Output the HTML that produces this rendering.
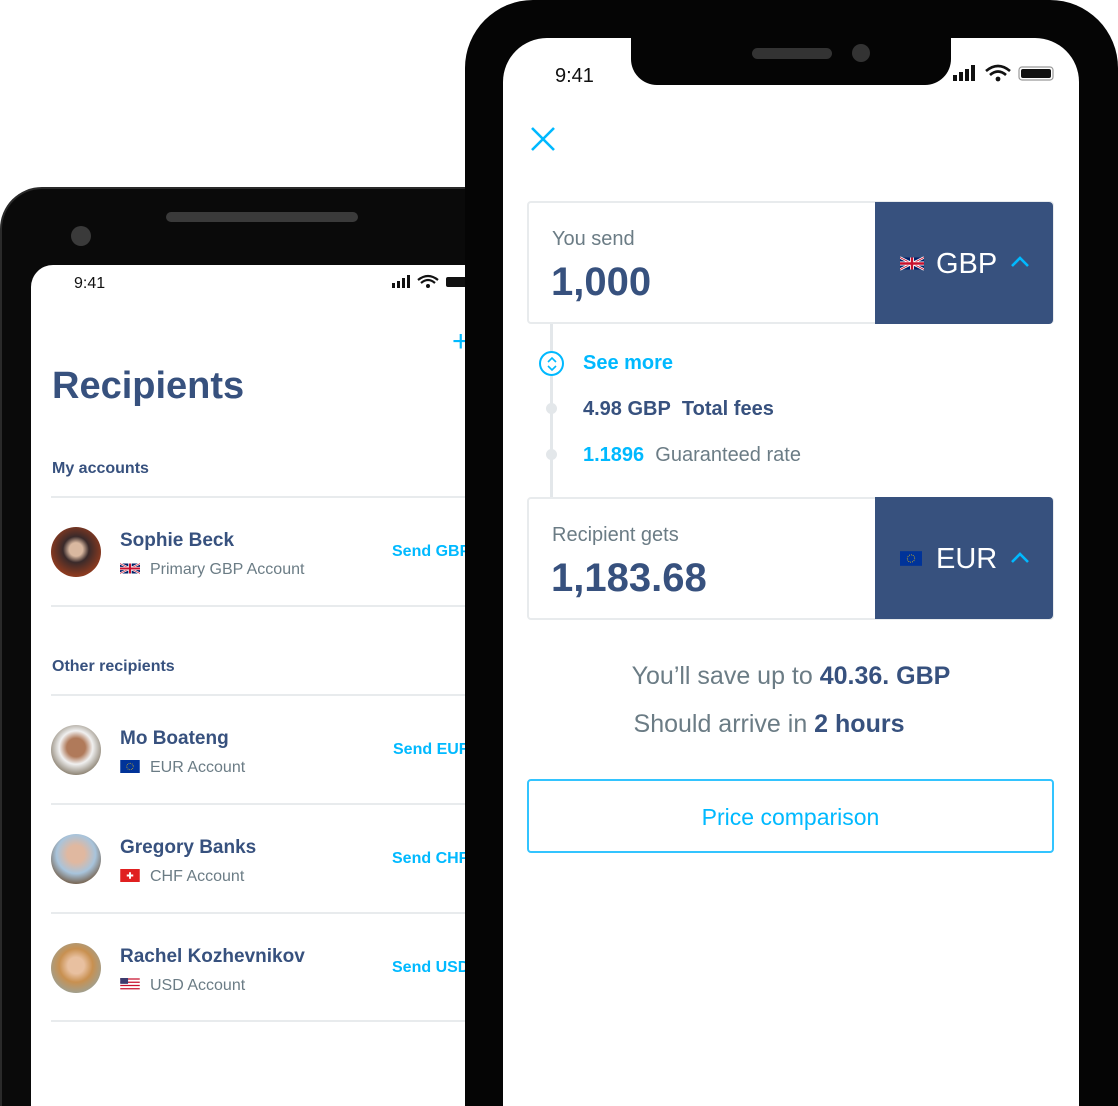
<!DOCTYPE html>
<html style="width:1118px;height:1106px;overflow:hidden"><head><meta charset="utf-8"><style>
*{margin:0;padding:0;box-sizing:border-box}
body{width:1118px;height:1106px;background:#fff;position:relative;overflow:hidden;font-family:"Liberation Sans",sans-serif}
.a{position:absolute}
.navy{color:#37517e}
.cy{color:#00b9ff}
.gr{color:#6b7c85}
.line{position:absolute;height:2px;background:#e8ebed}
.av{position:absolute;width:50px;height:50px;border-radius:50%}
.nm{position:absolute;font-size:19px;font-weight:bold;color:#37517e}
.sub{position:absolute;font-size:16px;color:#6b7c85}
.snd{position:absolute;font-size:16px;font-weight:bold;color:#00b9ff}
.fl{display:inline-block;vertical-align:-1px;margin-right:10px}
</style></head><body>
<svg width="0" height="0" style="position:absolute"><defs>
<symbol id="uk" viewBox="0 0 60 30"><rect width="60" height="30" fill="#012169"/><path d="M0 0L60 30M60 0L0 30" stroke="#fff" stroke-width="6"/><path d="M0 0L60 30M60 0L0 30" stroke="#c8102e" stroke-width="2"/><path d="M30 0V30M0 15H60" stroke="#fff" stroke-width="10"/><path d="M30 0V30M0 15H60" stroke="#c8102e" stroke-width="6"/></symbol>
<symbol id="eu" viewBox="0 0 30 20"><rect width="30" height="20" fill="#003399"/><circle cx="15" cy="10" r="5" fill="none" stroke="#fc0" stroke-width="1.2" stroke-dasharray="1 1.6"/></symbol>
<symbol id="ch" viewBox="0 0 30 20"><rect width="30" height="20" fill="#e02020"/><path d="M15 5V15M10 10H20" stroke="#fff" stroke-width="3"/></symbol>
<symbol id="us" viewBox="0 0 30 20"><rect width="30" height="20" fill="#fff"/><path d="M0 1.5H30M0 6.5H30M0 11.5H30M0 16.5H30" stroke="#c8102e" stroke-width="2"/><rect width="12" height="9" fill="#3c3b6e"/></symbol>
</defs></svg>
<!-- back phone -->
<div class="a" style="left:0;top:187px;width:540px;height:919px;background:#0a0a0a;border-radius:42px 42px 0 0;border:2px solid #2a2a2a;border-bottom:0"></div>
<div class="a" style="left:166px;top:212px;width:192px;height:10px;background:#3a3a3a;border-radius:5px"></div>
<div class="a" style="left:71px;top:226px;width:20px;height:20px;background:#3a3a3a;border-radius:50%"></div>
<div class="a" style="left:31px;top:265px;width:500px;height:841px;background:#fff;border-radius:22px 22px 0 0"></div>
<div class="a" style="left:74px;top:275px;font-size:16px;color:#111">9:41</div>
<svg class="a" style="left:392px;top:274px" width="80" height="16"><rect x="0" y="9" width="3" height="5" fill="#111"/><rect x="5" y="7" width="3" height="7" fill="#111"/><rect x="10" y="4" width="3" height="10" fill="#111"/><rect x="15" y="1" width="3" height="13" fill="#111"/><path d="M26 6 Q36 -2 46 6 M29 9 Q36 3 43 9" stroke="#111" stroke-width="2.2" fill="none"/><circle cx="36" cy="12" r="2" fill="#111"/><rect x="54" y="3" width="24" height="10" rx="2" fill="#111"/></svg>
<div class="a cy" style="left:452px;top:325px;font-size:30px">+</div>
<div class="a navy" style="left:52px;top:365px;font-size:38px;font-weight:bold">Recipients</div>
<div class="a navy" style="left:52px;top:460px;font-size:16px;font-weight:bold">My accounts</div>
<div class="line" style="left:51px;top:496px;width:420px"></div>
<div class="av" style="left:51px;top:527px;background:radial-gradient(circle at 50% 45%,#d9b8a0 18%,#3a2a2a 35%,#8a3a20 70%)"></div>
<div class="nm" style="left:120px;top:530px">Sophie Beck</div>
<div class="sub" style="left:120px;top:561px"><svg class="fl" width="20" height="13"><use href="#uk"/></svg>Primary GBP Account</div>
<div class="snd" style="left:392px;top:543px">Send GBP</div>
<div class="line" style="left:51px;top:605px;width:420px"></div>
<div class="a navy" style="left:52px;top:658px;font-size:16px;font-weight:bold">Other recipients</div>
<div class="line" style="left:51px;top:694px;width:420px"></div>
<div class="av" style="left:51px;top:725px;background:radial-gradient(circle at 50% 45%,#b07a5a 25%,#f0f0f0 45%,#8a8070 75%)"></div>
<div class="nm" style="left:120px;top:728px">Mo Boateng</div>
<div class="sub" style="left:120px;top:759px"><svg class="fl" width="20" height="13"><use href="#eu"/></svg>EUR Account</div>
<div class="snd" style="left:393px;top:741px">Send EUR</div>
<div class="line" style="left:51px;top:803px;width:420px"></div>
<div class="av" style="left:51px;top:834px;background:radial-gradient(circle at 50% 40%,#e0b8a0 22%,#a8c4dc 50%,#7a6a5a 75%)"></div>
<div class="nm" style="left:120px;top:837px">Gregory Banks</div>
<div class="sub" style="left:120px;top:868px"><svg class="fl" width="20" height="13"><use href="#ch"/></svg>CHF Account</div>
<div class="snd" style="left:392px;top:850px">Send CHF</div>
<div class="line" style="left:51px;top:912px;width:420px"></div>
<div class="av" style="left:51px;top:943px;background:radial-gradient(circle at 50% 45%,#e8c0a0 22%,#c89050 45%,#a0a090 75%)"></div>
<div class="nm" style="left:120px;top:946px">Rachel Kozhevnikov</div>
<div class="sub" style="left:120px;top:977px"><svg class="fl" width="20" height="13"><use href="#us"/></svg>USD Account</div>
<div class="snd" style="left:392px;top:959px">Send USD</div>
<div class="line" style="left:51px;top:1020px;width:420px"></div>

<!-- front phone -->
<div class="a" style="left:465px;top:0;width:653px;height:1106px;background:#050505;border-radius:68px 68px 0 0"></div>
<div class="a" style="left:503px;top:38px;width:576px;height:1068px;background:#fff;border-radius:44px 44px 0 0"></div>
<div class="a" style="left:631px;top:30px;width:320px;height:55px;background:#050505;border-radius:0 0 26px 26px"></div>
<div class="a" style="left:752px;top:48px;width:80px;height:11px;background:#333;border-radius:6px"></div>
<div class="a" style="left:852px;top:44px;width:18px;height:18px;background:#333;border-radius:50%"></div>
<div class="a" style="left:555px;top:65px;font-size:20px;color:#111">9:41</div>
<svg class="a" style="left:953px;top:64px" width="104" height="20"><rect x="0" y="11" width="4" height="6" fill="#111"/><rect x="6" y="8" width="4" height="9" fill="#111"/><rect x="12" y="5" width="4" height="12" fill="#111"/><rect x="18" y="1" width="4" height="16" fill="#111"/><path d="M33 7 Q45 -3 57 7 M37 11 Q45 4 53 11" stroke="#111" stroke-width="2.6" fill="none"/><circle cx="45" cy="15" r="2.4" fill="#111"/><rect x="66" y="3" width="34" height="13" rx="3" fill="none" stroke="#999" stroke-width="1.2"/><rect x="68" y="5" width="30" height="9" rx="2" fill="#111"/></svg>
<svg class="a" style="left:530px;top:126px" width="26" height="26"><path d="M2 2L24 24M24 2L2 24" stroke="#00b9ff" stroke-width="2.6"/></svg>

<div class="a" style="left:527px;top:201px;width:527px;height:123px;border:2px solid #e8ebed;border-radius:4px"></div>
<div class="a" style="left:875px;top:202px;width:178px;height:122px;background:#37517e;border-radius:0 4px 4px 0"></div>
<div class="a gr" style="left:552px;top:228px;font-size:20px">You send</div>
<div class="a navy" style="left:551px;top:260px;font-size:40px;font-weight:bold">1,000</div>
<div class="a" style="left:900px;top:248px;font-size:29px;color:#fff"><svg class="fl" width="24" height="15" style="margin-right:12px;vertical-align:2px"><use href="#uk"/></svg>GBP</div>
<svg class="a" style="left:1010px;top:255px" width="20" height="14"><path d="M2 11L10 3L18 11" stroke="#00b9ff" stroke-width="2.6" fill="none"/></svg>

<div class="a" style="left:550px;top:324px;width:3px;height:173px;background:#e3e7ea"></div>
<div class="a" style="left:539px;top:351px;width:25px;height:25px;border:2px solid #00b9ff;border-radius:50%;background:#fff"></div>
<svg class="a" style="left:545px;top:356px" width="14" height="16"><path d="M3 6L7 2L11 6M3 10L7 14L11 10" stroke="#00b9ff" stroke-width="1.6" fill="none"/></svg>
<div class="a cy" style="left:583px;top:352px;font-size:20px;font-weight:bold">See more</div>
<div class="a" style="left:546px;top:403px;width:11px;height:11px;border-radius:50%;background:#e3e7ea"></div>
<div class="a navy" style="left:583px;top:398px;font-size:20px;font-weight:bold">4.98 GBP&nbsp; Total fees</div>
<div class="a" style="left:546px;top:449px;width:11px;height:11px;border-radius:50%;background:#e3e7ea"></div>
<div class="a" style="left:583px;top:444px;font-size:20px"><b class="cy">1.1896</b>&nbsp; <span class="gr">Guaranteed rate</span></div>

<div class="a" style="left:527px;top:497px;width:527px;height:123px;border:2px solid #e8ebed;border-radius:4px"></div>
<div class="a" style="left:875px;top:497px;width:178px;height:122px;background:#37517e;border-radius:0 4px 4px 0"></div>
<div class="a gr" style="left:552px;top:524px;font-size:20px">Recipient gets</div>
<div class="a navy" style="left:551px;top:556px;font-size:40px;font-weight:bold">1,183.68</div>
<div class="a" style="left:900px;top:543px;font-size:29px;color:#fff"><svg class="fl" width="22" height="15" style="margin-right:14px;vertical-align:2px"><use href="#eu"/></svg>EUR</div>
<svg class="a" style="left:1010px;top:551px" width="20" height="14"><path d="M2 11L10 3L18 11" stroke="#00b9ff" stroke-width="2.6" fill="none"/></svg>

<div class="a" style="left:503px;width:576px;top:662px;text-align:center;font-size:25px;color:#6b7c85">You’ll save up to <b style="color:#37517e">40.36. GBP</b></div>
<div class="a" style="left:481px;width:576px;top:710px;text-align:center;font-size:25px;color:#6b7c85">Should arrive in <b style="color:#37517e">2 hours</b></div>
<div class="a cy" style="left:527px;top:779px;width:527px;height:74px;border:2px solid #33c4ff;border-radius:4px;text-align:center;line-height:72px;font-size:23px">Price comparison</div>
</body></html>
